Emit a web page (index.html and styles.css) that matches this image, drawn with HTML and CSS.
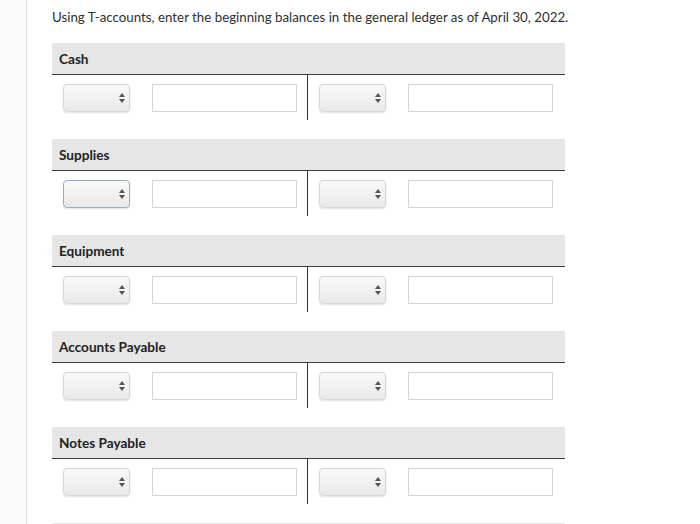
FILE: index.html
```html
<!DOCTYPE html>
<html>
<head>
<meta charset="utf-8">
<link rel="stylesheet" href="styles.css">
</head>
<body>
<div class="page">
  <div class="gutter"></div>
  <div class="main">
    <p class="prompt">Using T-accounts, enter the beginning balances in the general ledger as of April 30, 2022.</p>

    <div class="account">
      <div class="acct-head">Cash</div>
      <div class="t-body">
        <div class="side left"><span class="sel"><span class="arr"></span></span><span class="inp"></span></div>
        <div class="side right"><span class="sel"><span class="arr"></span></span><span class="inp"></span></div>
      </div>
    </div>

    <div class="account">
      <div class="acct-head">Supplies</div>
      <div class="t-body">
        <div class="side left"><span class="sel focus"><span class="arr"></span></span><span class="inp"></span></div>
        <div class="side right"><span class="sel"><span class="arr"></span></span><span class="inp"></span></div>
      </div>
    </div>

    <div class="account">
      <div class="acct-head">Equipment</div>
      <div class="t-body">
        <div class="side left"><span class="sel"><span class="arr"></span></span><span class="inp"></span></div>
        <div class="side right"><span class="sel"><span class="arr"></span></span><span class="inp"></span></div>
      </div>
    </div>

    <div class="account">
      <div class="acct-head">Accounts Payable</div>
      <div class="t-body">
        <div class="side left"><span class="sel"><span class="arr"></span></span><span class="inp"></span></div>
        <div class="side right"><span class="sel"><span class="arr"></span></span><span class="inp"></span></div>
      </div>
    </div>

    <div class="account">
      <div class="acct-head">Notes Payable</div>
      <div class="t-body">
        <div class="side left"><span class="sel"><span class="arr"></span></span><span class="inp"></span></div>
        <div class="side right"><span class="sel"><span class="arr"></span></span><span class="inp"></span></div>
      </div>
    </div>

    <div class="account">
      <div class="acct-head"></div>
    </div>
  </div>
</div>
</body>
</html>
```
FILE: styles.css
```css
html, body {
  margin: 0;
  padding: 0;
  background: #fff;
  overflow: hidden;
}
.page {
  display: flex;
  height: 524px;
  overflow: hidden;
  font-family: Lato, "Liberation Sans", sans-serif;
  color: #333;
}
.gutter {
  width: 26px;
  flex: none;
  background: #fbfbfb;
  border-right: 1px solid #e2e2e2;
}
.main {
  padding: 7px 0 0 25px;
  width: 513px;
}
.prompt {
  margin: 0;
  font-size: 13.3px;
  line-height: 20px;
  white-space: nowrap;
  color: #2f2f2f;
}
.account {
  margin-top: 16px;
}
.account + .account {
  margin-top: 19px;
}
.acct-head {
  height: 30px;
  padding-top: 1px;
  background: #e6e6e6;
  border-bottom: 1.5px solid #3a3a3a;
  padding-left: 7px;
  font-weight: bold;
  font-size: 13.6px;
  line-height: 31px;
  color: #222;
}
.t-body {
  display: flex;
  height: 45px;
}
.side {
  display: flex;
  align-items: flex-start;
  padding: 9px 0 0 11px;
  gap: 22px;
}
.side.left {
  width: 244px;
  border-right: 1.5px solid #333;
}
.sel {
  position: relative;
  width: 65px;
  height: 26px;
  border: 1px solid #d6d6d6;
  border-radius: 4px;
  background: linear-gradient(#f9f9f9, #e9e9e9);
  box-shadow: 0 1px 2px rgba(0,0,0,0.12);
}
.sel.focus {
  border-color: #8fb0cf;
}
.arr {
  position: absolute;
  right: 7px;
  top: 8px;
  width: 0;
  height: 0;
}
.arr::before, .arr::after {
  content: "";
  position: absolute;
  left: -3px;
  border-left: 3px solid transparent;
  border-right: 3px solid transparent;
}
.arr::before {
  top: 0;
  border-bottom: 4px solid #555;
}
.arr::after {
  top: 6px;
  border-top: 4px solid #555;
}
.inp {
  width: 143px;
  height: 26px;
  border: 1px solid #d4d4d4;
  background: #fff;
}
```
